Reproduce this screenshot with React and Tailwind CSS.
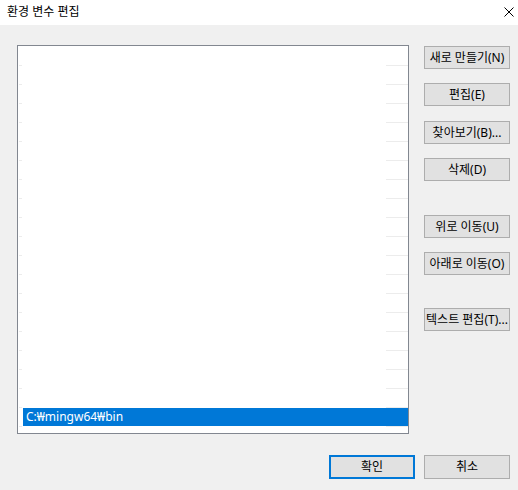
import React from 'react';

const font = "font-['Noto_Sans','Noto_Sans_CJK_KR',sans-serif]";

// one list row: content + faint tick lines at the bottom
function Row({ text, selected }) {
    return (
        <div className="flex flex-col h-[19px]">
            <div className="h-[18px] flex">
                {selected && (
                    <div className="ml-[5px] flex-1 bg-[#0078d7] text-white text-[12px] leading-[18px] pl-[3px]">
                        {text}
                    </div>
                )}
            </div>
            <div className="h-px flex justify-between">
                <div className="ml-px w-[3px] bg-[#ececec]"></div>
                <div className="w-[22px] bg-[#ececec]"></div>
            </div>
        </div>
    );
}

function Btn({ children, className = '' }) {
    return (
        <button
            className={`w-[86px] h-[23px] bg-[#e1e1e1] border border-[#adadad] text-[12px] leading-none text-black whitespace-nowrap flex items-center justify-center ${className}`}
        >
            {children}
        </button>
    );
}

export default function App() {
    const rows = Array.from({ length: 20 }, (_, i) => i);

    return (
        <div className={`w-[518px] h-[490px] bg-[#f0f0f0] flex flex-col ${font}`}>
            {/* title bar */}
            <div className="h-[25px] bg-white flex items-center justify-between pl-[7px] pr-[4px]">
                <span className="text-[12px] leading-none text-black pb-px">환경 변수 편집</span>
                <svg width="10" height="10" viewBox="0 0 10 10" className="mb-px">
                    <path d="M0.5 0.5 L9.5 9.5 M9.5 0.5 L0.5 9.5" stroke="#000" strokeWidth="1" fill="none" />
                </svg>
            </div>

            {/* body */}
            <div className="flex pl-[17px] pt-[20px]">
                <div className="w-[392px] h-[389px] bg-white border border-[#828790] pt-px">
                    {rows.map((i) => (
                        <Row key={i} selected={i === 19} text="C:₩mingw64₩bin" />
                    ))}
                </div>

                <div className="ml-[15px] pt-px flex flex-col">
                    <Btn>새로 만들기(N)</Btn>
                    <Btn className="mt-[14px]">편집(E)</Btn>
                    <Btn className="mt-[15px]">찾아보기(B)...</Btn>
                    <Btn className="mt-[14px]">삭제(D)</Btn>
                    <Btn className="mt-[34px]">위로 이동(U)</Btn>
                    <Btn className="mt-[14px]">아래로 이동(O)</Btn>
                    <Btn className="mt-[33px]">텍스트 편집(T)...</Btn>
                </div>
            </div>

            {/* footer buttons */}
            <div className="flex justify-end gap-[9px] pr-[8px] mt-[21px]">
                <button className="w-[86px] h-[24px] bg-[#e1e1e1] border-2 border-[#0078d7] text-[12px] leading-none text-black flex items-center justify-center">
                    확인
                </button>
                <button className="w-[86px] h-[24px] bg-[#e1e1e1] border border-[#adadad] text-[12px] leading-none text-black flex items-center justify-center">
                    취소
                </button>
            </div>
        </div>
    );
}
